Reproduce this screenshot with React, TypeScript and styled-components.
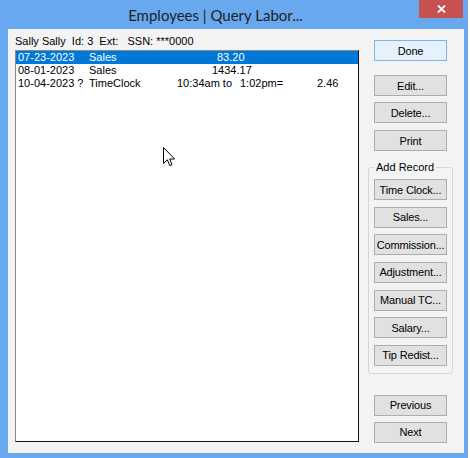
import React from 'react'
import styled, { createGlobalStyle } from 'styled-components'

const GlobalStyle = createGlobalStyle`
  html, body {
    margin: 0;
    padding: 0;
    background: #ffffff;
  }
  body {
    font-family: "Liberation Sans", Arial, sans-serif;
    font-size: 11px;
    color: #000;
  }
`

const Window = styled.div`
  width: 468px;
  height: 458px;
  background: #68a8ef;
  display: flex;
  flex-direction: column;
`

const TitleBar = styled.div`
  height: 29px;
  display: flex;
  align-items: flex-start;
`

const Title = styled.div`
  flex: 1;
  height: 30px;
  padding-left: 12px;
  display: flex;
  align-items: center;
  justify-content: center;
  font-family: Lato, "Open Sans", sans-serif;
  font-size: 15px;
  color: #222;
`

const CloseButton = styled.div`
  width: 44px;
  height: 18px;
  margin-right: 5px;
  background: #c75050;
  display: flex;
  align-items: center;
  justify-content: center;
`

const Client = styled.div`
  flex: 1;
  margin: 0 4px 5px 8px;
  background: #f3f3f3;
  display: flex;
`

const LeftColumn = styled.div`
  width: 344px;
  padding: 4px 0 0 7px;
  display: flex;
  flex-direction: column;
`

const InfoLine = styled.div`
  height: 17px;
  line-height: 17px;
  white-space: pre;
`

const ListBox = styled.div`
  position: relative;
  height: 392px;
  box-sizing: border-box;
  background: #fff;
  border: 1px solid;
  border-color: #8a8a8a #111 #111 #8a8a8a;
`

const Row = styled.div<{ $selected?: boolean }>`
  height: 13px;
  line-height: 13px;
  display: grid;
  grid-template-columns: 71px 88px 63px 77px 1fr;
  padding-left: 2px;
  white-space: pre;
  background: ${p => (p.$selected ? '#0078d7' : 'transparent')};
  color: ${p => (p.$selected ? '#fff' : '#000')};
`

const Cell = styled.span<{ $span?: number; $indent?: number }>`
  grid-column: span ${p => p.$span ?? 1};
  padding-left: ${p => p.$indent ?? 0}px;
`

const Cursor = styled.svg`
  position: absolute;
  left: 147px;
  top: 96px;
`

const RightColumn = styled.div`
  width: 85px;
  margin-left: 9px;
  padding-top: 11px;
  display: flex;
  flex-direction: column;
`

const Button = styled.div<{ $default?: boolean; $gap?: number }>`
  width: 73px;
  height: 21px;
  flex: none;
  box-sizing: border-box;
  margin-left: 6px;
  margin-top: ${p => p.$gap ?? 0}px;
  border: 1px solid ${p => (p.$default ? '#7eb4ea' : '#adadad')};
  background: ${p => (p.$default ? '#e5f1fb' : '#e1e1e1')};
  display: flex;
  align-items: center;
  justify-content: center;
  white-space: nowrap;
  letter-spacing: -0.15px;
`

const GroupBox = styled.fieldset`
  margin: 10px 0 0 0;
  padding: 5px 5px 7px 5px;
  border: 1px solid #d6d6d6;
  border-radius: 3px;
  display: flex;
  flex-direction: column;
  gap: 6.67px;
  min-inline-size: 0;
  box-sizing: border-box;
  width: 85px;

  ${Button} {
    margin-left: 0;
  }
`

const Legend = styled.legend`
  padding: 0 2px;
  line-height: 13px;
  font-size: 11px;
`

const groupButtons = [
  'Time Clock...',
  'Sales...',
  'Commission...',
  'Adjustment...',
  'Manual TC...',
  'Salary...',
  'Tip Redist...',
]

export default function App() {
  return (
    <>
      <GlobalStyle />
      <Window>
        <TitleBar>
          <Title>Employees | Query Labor...</Title>
          <CloseButton>
            <svg width="9" height="8" viewBox="0 0 9 8">
              <path d="M1 0.5 L8 7.5 M8 0.5 L1 7.5" stroke="#fff" strokeWidth="1.8" />
            </svg>
          </CloseButton>
        </TitleBar>
        <Client>
          <LeftColumn>
            <InfoLine>Sally Sally  Id: 3  Ext:   SSN: ***0000</InfoLine>
            <ListBox>
              <Row $selected>
                <Cell>07-23-2023</Cell>
                <Cell>Sales</Cell>
                <Cell $span={2} $indent={40}>83.20</Cell>
              </Row>
              <Row>
                <Cell>08-01-2023</Cell>
                <Cell>Sales</Cell>
                <Cell $span={2} $indent={35}>1434.17</Cell>
              </Row>
              <Row>
                <Cell>10-04-2023 ?</Cell>
                <Cell>TimeClock</Cell>
                <Cell>10:34am to</Cell>
                <Cell>1:02pm=</Cell>
                <Cell>2.46</Cell>
              </Row>
              <Cursor width="13" height="20" viewBox="0 0 13 20">
                <path
                  d="M0.5 0.5 L0.5 16.5 L4.3 12.8 L6.8 18.6 L9 17.6 L6.6 12 L11.6 12 Z"
                  fill="#fff"
                  stroke="#000"
                  strokeWidth="1"
                  strokeLinejoin="miter"
                />
              </Cursor>
            </ListBox>
          </LeftColumn>
          <RightColumn>
            <Button $default>Done</Button>
            <Button $gap={14}>Edit...</Button>
            <Button $gap={6}>Delete...</Button>
            <Button $gap={7}>Print</Button>
            <GroupBox>
              <Legend>Add Record</Legend>
              {groupButtons.map(label => (
                <Button key={label}>{label}</Button>
              ))}
            </GroupBox>
            <Button $gap={21}>Previous</Button>
            <Button $gap={6}>Next</Button>
          </RightColumn>
        </Client>
      </Window>
    </>
  )
}
